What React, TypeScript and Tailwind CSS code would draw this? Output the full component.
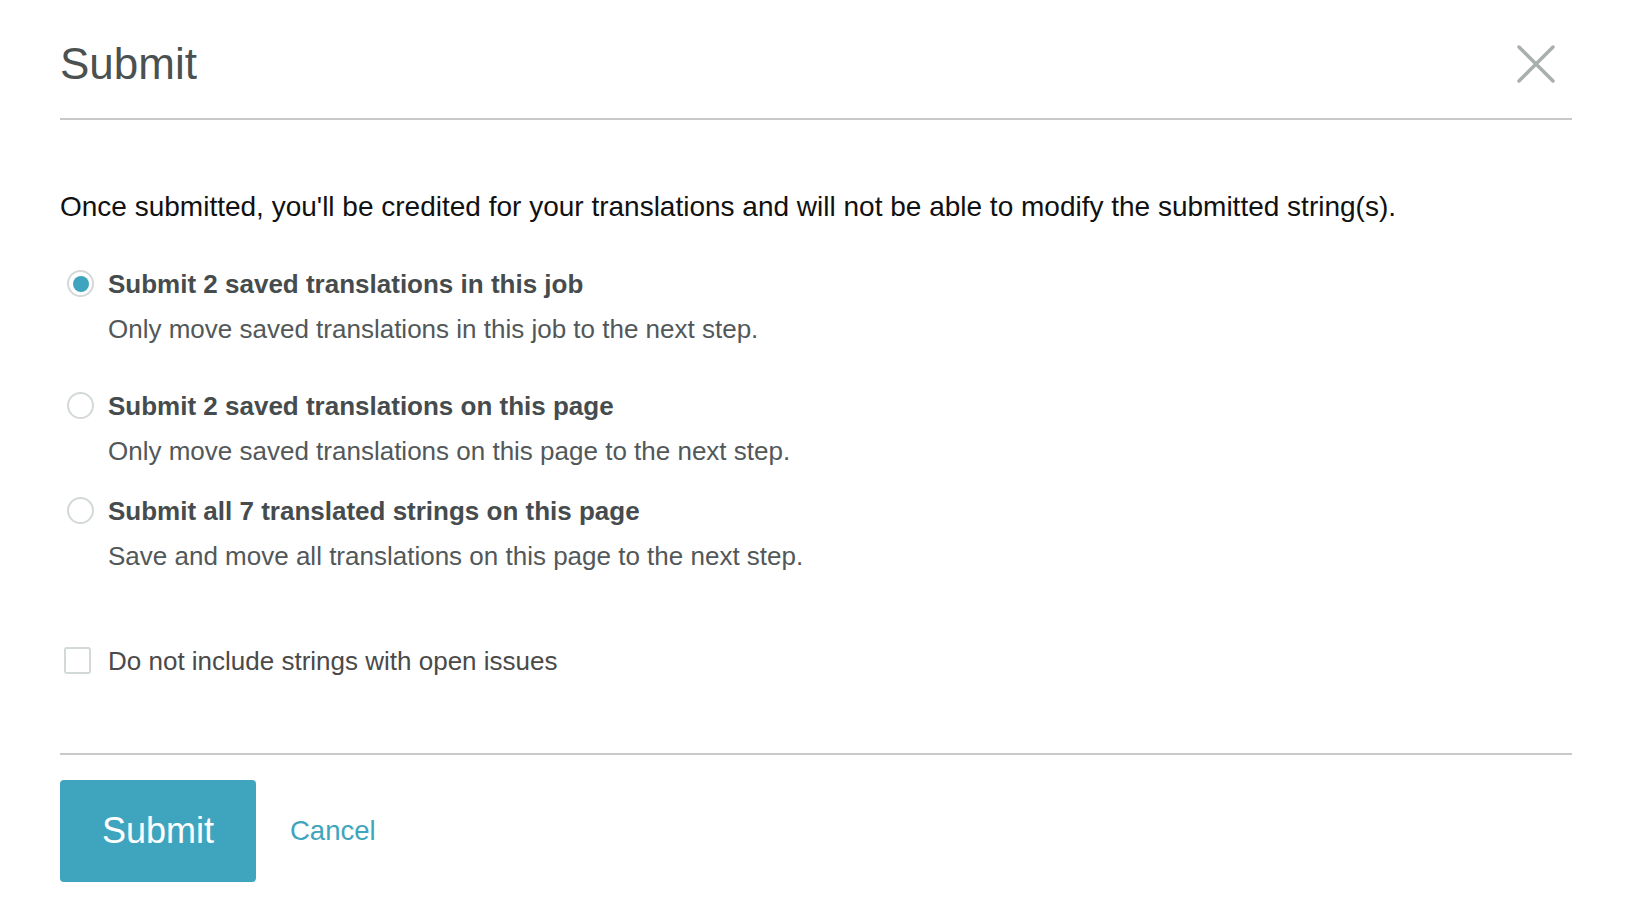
import { useState } from 'react';

const options = [
    {
        id: 'job',
        label: 'Submit 2 saved translations in this job',
        hint: 'Only move saved translations in this job to the next step.',
    },
    {
        id: 'page',
        label: 'Submit 2 saved translations on this page',
        hint: 'Only move saved translations on this page to the next step.',
    },
    {
        id: 'all',
        label: 'Submit all 7 translated strings on this page',
        hint: 'Save and move all translations on this page to the next step.',
    },
];

function Radio({ checked }: { checked: boolean }) {
    return (
        <span className="w-[27px] h-[27px] rounded-full border-2 border-[#d3d8d8] bg-white flex items-center justify-center shrink-0">
            {checked && <span className="w-[16px] h-[16px] rounded-full bg-[#3fa5bf]" />}
        </span>
    );
}

export default function App() {
    const [choice, setChoice] = useState('job');
    const [skipIssues, setSkipIssues] = useState(false);

    return (
        <div className="w-full min-h-screen bg-white pl-[60px] pr-[63px] font-['Liberation_Sans',Arial,sans-serif]">
            {/* Header */}
            <div className="h-[120px] pt-[10px] flex items-center justify-between border-b-2 border-[#c9c9c9]">
                <h1 className="text-[44px] leading-none text-[#4b5151] font-normal">Submit</h1>
                <button className="mr-[17px] w-[38px] h-[38px]" aria-label="Close">
                    <svg viewBox="0 0 38 38" className="w-[38px] h-[38px]">
                        <path d="M2 2 L36 36 M36 2 L2 36" stroke="#a8b0af" strokeWidth="3.5" strokeLinecap="round" />
                    </svg>
                </button>
            </div>

            {/* Body */}
            <p className="mt-[73px] text-[28px] leading-none text-[#111111]">
                Once submitted, you'll be credited for your translations and will not be able to modify the submitted string(s).
            </p>

            <div className="mt-[49px]">
                {options.map((opt, i) => (
                    <div
                        key={opt.id}
                        onClick={() => setChoice(opt.id)}
                        className={`cursor-pointer ${i === 1 ? 'mt-[50px]' : i === 2 ? 'mt-[33px]' : ''}`}
                    >
                        <div className="flex items-center">
                            <span className="ml-[7px] mr-[14px]">
                                <Radio checked={choice === opt.id} />
                            </span>
                            <span className="text-[26px] leading-none font-bold text-[#464c4d]">{opt.label}</span>
                        </div>
                        <p className="mt-[19px] pl-[48px] text-[26px] leading-none text-[#525859]">{opt.hint}</p>
                    </div>
                ))}
            </div>

            <label className="mt-[78px] flex items-center cursor-pointer">
                <span
                    onClick={() => setSkipIssues(!skipIssues)}
                    className={`ml-[4px] mr-[17px] w-[27px] h-[27px] rounded-[3px] border-2 border-[#d3d8d8] ${skipIssues ? 'bg-[#3fa5bf]' : 'bg-white'}`}
                />
                <span className="text-[26px] leading-none text-[#4a4a4a]">Do not include strings with open issues</span>
            </label>

            {/* Footer */}
            <div className="mt-[79px] border-t-2 border-[#c9c9c9] pt-[25px] flex items-center">
                <button className="w-[196px] h-[102px] rounded-[4px] bg-[#3fa5bf] text-white text-[36px] leading-none">
                    Submit
                </button>
                <button className="ml-[34px] text-[27.5px] leading-none text-[#3fa5bf]">Cancel</button>
            </div>
        </div>
    );
}
